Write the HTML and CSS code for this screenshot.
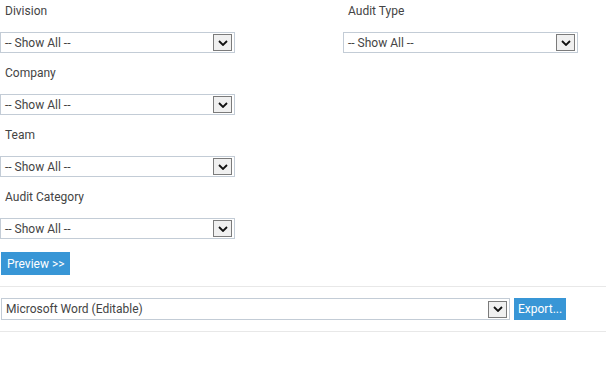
FILE: index.html
```html
<!DOCTYPE html>
<html>
<head>
  <title>Audit Report</title>
  <link rel="stylesheet" href="styles.css">
</head>
<body>
  <div class="filters">
    <div class="field">
      <div class="label">Division</div>
      <div class="select">
        <span>-- Show All --</span>
        <span class="arrow"><svg width="10" height="6" viewBox="0 0 10 6"><path d="M1 1 L5 5 L9 1" fill="none" stroke="#111" stroke-width="1.8"/></svg></span>
      </div>
    </div>
    <div class="field">
      <div class="label">Audit Type</div>
      <div class="select">
        <span>-- Show All --</span>
        <span class="arrow"><svg width="10" height="6" viewBox="0 0 10 6"><path d="M1 1 L5 5 L9 1" fill="none" stroke="#111" stroke-width="1.8"/></svg></span>
      </div>
    </div>
    <div class="field">
      <div class="label">Company</div>
      <div class="select">
        <span>-- Show All --</span>
        <span class="arrow"><svg width="10" height="6" viewBox="0 0 10 6"><path d="M1 1 L5 5 L9 1" fill="none" stroke="#111" stroke-width="1.8"/></svg></span>
      </div>
    </div>
    <div class="field full">
      <div class="label">Team</div>
      <div class="select">
        <span>-- Show All --</span>
        <span class="arrow"><svg width="10" height="6" viewBox="0 0 10 6"><path d="M1 1 L5 5 L9 1" fill="none" stroke="#111" stroke-width="1.8"/></svg></span>
      </div>
    </div>
    <div class="field full">
      <div class="label">Audit Category</div>
      <div class="select">
        <span>-- Show All --</span>
        <span class="arrow"><svg width="10" height="6" viewBox="0 0 10 6"><path d="M1 1 L5 5 L9 1" fill="none" stroke="#111" stroke-width="1.8"/></svg></span>
      </div>
    </div>
  </div>

  <button class="btn preview">Preview &gt;&gt;</button>

  <div class="export-row">
    <div class="select wide">
      <span>Microsoft Word (Editable)</span>
      <span class="arrow"><svg width="10" height="6" viewBox="0 0 10 6"><path d="M1 1 L5 5 L9 1" fill="none" stroke="#111" stroke-width="1.8"/></svg></span>
    </div>
    <button class="btn export">Export...</button>
  </div>
</body>
</html>
```

FILE: styles.css
```css
body {
  margin: 0;
  font-family: Roboto, "Liberation Sans", sans-serif;
  font-size: 12px;
  color: #444;
  background-color: #fff;
}
.filters {
  display: grid;
  grid-template-columns: 235px 235px;
  column-gap: 108px;
}
.field {
  padding-bottom: 9px;
}
.field:last-child {
  padding-bottom: 0;
}
.field.full {
  grid-column: 1;
}
.label {
  padding: 2px 5px 0;
  line-height: 18px;
  margin-bottom: 12px;
  color: #444;
}
.select {
  display: flex;
  align-items: center;
  justify-content: space-between;
  box-sizing: border-box;
  height: 21px;
  border: 1px solid #c3ccd6;
  padding: 0 2px 0 4px;
  color: #444;
  background-color: #fff;
}
.arrow {
  display: flex;
  align-items: center;
  justify-content: center;
  box-sizing: border-box;
  width: 19px;
  height: 17px;
  border: 1px solid #7b7b7b;
  background-color: #f0f0f0;
}
.btn {
  border: none;
  background-color: #3896d6;
  color: #fff;
  font-family: Roboto, "Liberation Sans", sans-serif;
  font-size: 12px;
  white-space: nowrap;
  cursor: pointer;
}
.preview {
  display: block;
  margin: 13px 0 11px 1px;
  height: 23px;
  padding: 0 6px;
}
.export-row {
  display: flex;
  gap: 4px;
  border-top: 1px solid #e8e8e8;
  border-bottom: 1px solid #e8e8e8;
  padding: 11px 0 11px 1px;
}
.select.wide {
  width: 509px;
  height: 22px;
}
.export {
  height: 22px;
  padding: 0 4px;
}
```
